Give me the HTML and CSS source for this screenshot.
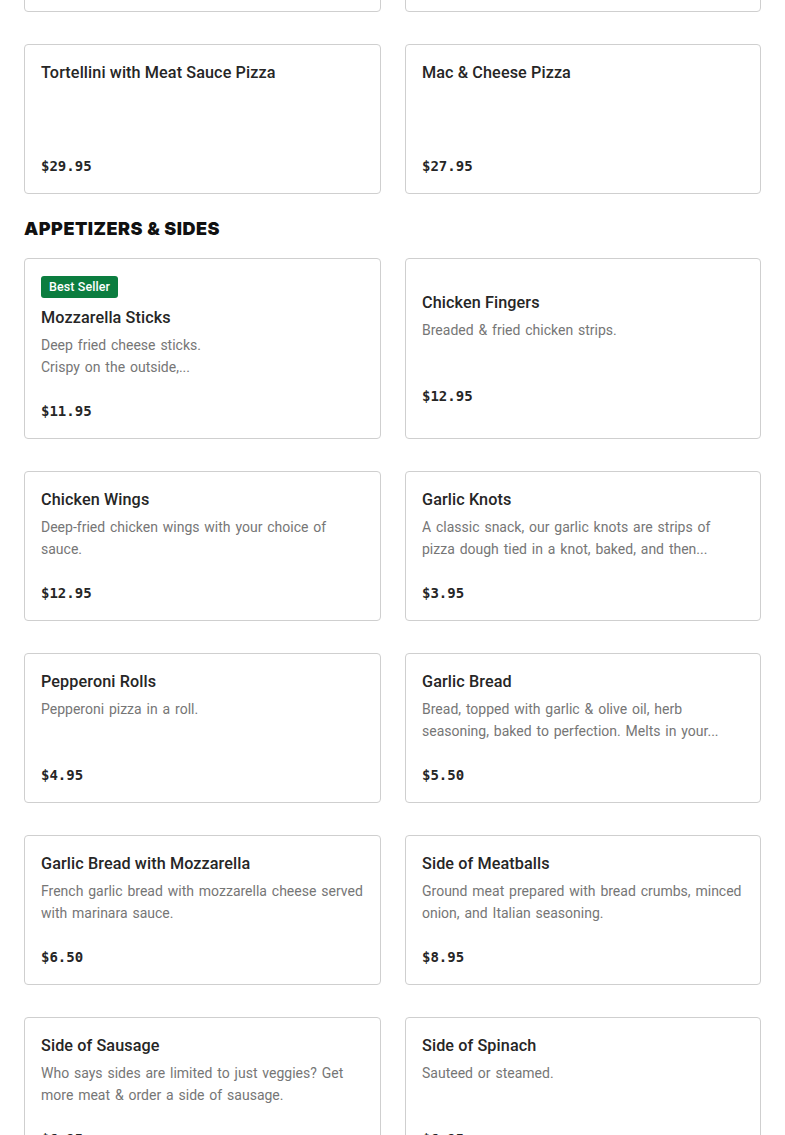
FILE: index.html
```html
<!DOCTYPE html>
<html>
<head>
<meta charset="utf-8">
<link rel="stylesheet" href="styles.css">
</head>
<body>
<main class="page">
  <section class="grid">
    <div class="card"></div>
    <div class="card"></div>
    <div class="card"><div class="title">Tortellini with Meat Sauce Pizza</div><div class="desc"></div><div class="price">$29.95</div></div>
    <div class="card"><div class="title">Mac &amp; Cheese Pizza</div><div class="desc"></div><div class="price">$27.95</div></div>
  </section>
  <h2 class="section-title">APPETIZERS &amp; SIDES</h2>
  <section class="grid">
    <div class="card"><span class="badge">Best Seller</span><div class="title">Mozzarella Sticks</div><div class="desc">Deep fried cheese sticks.<br>Crispy on the outside,...</div><div class="price">$11.95</div></div>
    <div class="card"><div class="title">Chicken Fingers</div><div class="desc">Breaded &amp; fried chicken strips.</div><div class="price">$12.95</div></div>
    <div class="card"><div class="title">Chicken Wings</div><div class="desc">Deep-fried chicken wings with your choice of sauce.</div><div class="price">$12.95</div></div>
    <div class="card"><div class="title">Garlic Knots</div><div class="desc">A classic snack, our garlic knots are strips of pizza dough tied in a knot, baked, and then...</div><div class="price">$3.95</div></div>
    <div class="card"><div class="title">Pepperoni Rolls</div><div class="desc">Pepperoni pizza in a roll.</div><div class="price">$4.95</div></div>
    <div class="card"><div class="title">Garlic Bread</div><div class="desc">Bread, topped with garlic &amp; olive oil, herb seasoning, baked to perfection. Melts in your...</div><div class="price">$5.50</div></div>
    <div class="card"><div class="title">Garlic Bread with Mozzarella</div><div class="desc">French garlic bread with mozzarella cheese served with marinara sauce.</div><div class="price">$6.50</div></div>
    <div class="card"><div class="title">Side of Meatballs</div><div class="desc">Ground meat prepared with bread crumbs, minced onion, and Italian seasoning.</div><div class="price">$8.95</div></div>
    <div class="card"><div class="title">Side of Sausage</div><div class="desc">Who says sides are limited to just veggies? Get more meat &amp; order a side of sausage.</div><div class="price">$6.95</div></div>
    <div class="card"><div class="title">Side of Spinach</div><div class="desc">Sauteed or steamed.</div><div class="price">$6.95</div></div>
  </section>
</main>
</body>
</html>
```
FILE: styles.css
```css
html, body {
  margin: 0;
  padding: 0;
  background: #ffffff;
  overflow: hidden;
}
body {
  font-family: Roboto, "Liberation Sans", sans-serif;
  color: #2a2a2a;
}
.page {
  padding: 0 24px;
  margin-top: -138px;
}
.grid {
  display: grid;
  grid-template-columns: 357px 356px;
  column-gap: 24px;
  row-gap: 32px;
}
.card {
  border: 1px solid #cfcfcf;
  border-radius: 4px;
  padding: 17px 16px 16px;
  display: flex;
  flex-direction: column;
  justify-content: center;
  align-items: flex-start;
  min-height: 115px;
}
.badge {
  display: inline-block;
  background: #0b7d3f;
  color: #ffffff;
  font-size: 12.5px;
  font-weight: 500;
  line-height: 22px;
  height: 22px;
  padding: 0 8px;
  letter-spacing: 0.1px;
  border-radius: 3px;
  margin-bottom: 9px;
}
.title {
  font-size: 16.2px;
  font-weight: 500;
  line-height: 22px;
  letter-spacing: 0.1px;
  color: #262626;
}
.desc {
  margin-top: 5px;
  font-size: 14px;
  line-height: 22px;
  word-spacing: 1.4px;
  height: 44px;
  overflow: hidden;
  color: #767676;
  display: -webkit-box;
  -webkit-line-clamp: 2;
  -webkit-box-orient: vertical;
}
.price {
  margin-top: 22px;
  font-family: "DejaVu Sans Mono", "Liberation Mono", monospace;
  font-weight: bold;
  font-size: 14px;
  line-height: 22px;
  color: #262626;
}
.section-title {
  margin: 23px 0 17px;
  font-family: Inter, "Liberation Sans", sans-serif;
  font-size: 18px;
  font-weight: 900;
  line-height: 24px;
  letter-spacing: 0.5px;
  color: #111;
}
```
